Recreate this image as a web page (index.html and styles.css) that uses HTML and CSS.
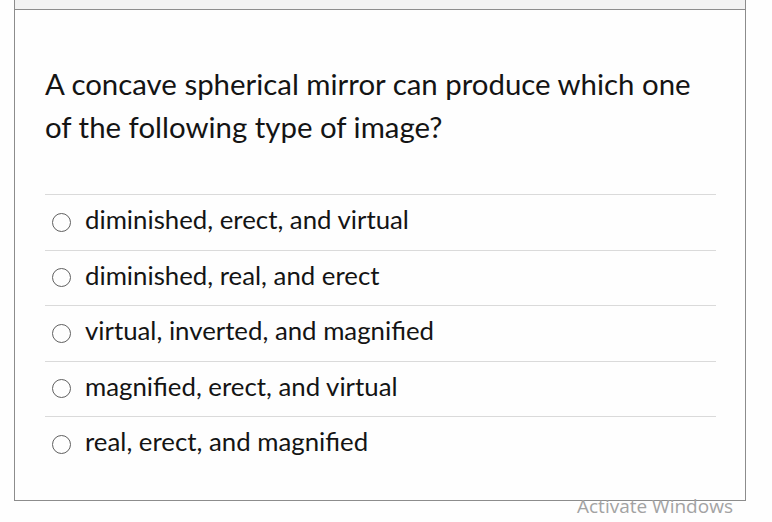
FILE: index.html
```html
<!DOCTYPE html>
<html>
<head>
<meta charset="utf-8">
<link rel="stylesheet" href="styles.css">
</head>
<body>
<div class="card">
  <div class="card-head"></div>
  <div class="question">A concave spherical mirror can produce which one of the following type of image?</div>
  <ul class="answers">
    <li class="answer"><span class="radio"></span><span class="label">diminished, erect, and virtual</span></li>
    <li class="answer"><span class="radio"></span><span class="label">diminished, real, and erect</span></li>
    <li class="answer"><span class="radio"></span><span class="label">virtual, inverted, and magnified</span></li>
    <li class="answer"><span class="radio"></span><span class="label">magnified, erect, and virtual</span></li>
    <li class="answer"><span class="radio"></span><span class="label">real, erect, and magnified</span></li>
  </ul>
</div>
<div class="watermark">Activate Windows</div>
</body>
</html>
```
FILE: styles.css
```css
html, body {
  margin: 0;
  padding: 0;
  background: #fefefe;
}
body {
  font-family: Lato, "Liberation Sans", sans-serif;
  color: #141414;
  position: relative;
  height: 522px;
  overflow: hidden;
}
.card {
  margin-left: 14px;
  width: 730px;
  height: 500px;
  border-left: 1px solid #8c8c8c;
  border-right: 1px solid #8c8c8c;
  border-bottom: 1px solid #8c8c8c;
}
.card-head {
  height: 9px;
  background: #f2f2f2;
  border-bottom: 1px solid #8c8c8c;
}
.question {
  margin: 52px 40px 0 30px;
  font-size: 29.4px;
  line-height: 43px;
}
.answers {
  list-style: none;
  margin: 46px 29px 0 30px;
  padding: 0;
}
.answer {
  display: flex;
  align-items: center;
  height: 54.5px;
  border-top: 1px solid #dadada;
}
.radio {
  width: 17px;
  height: 17px;
  border: 1px solid #606060;
  border-radius: 50%;
  margin-left: 7px;
  margin-right: 14px;
  flex: none;
}
.label {
  font-size: 25.8px;
  line-height: 30px;
  margin-top: -6px;
}
.watermark {
  position: absolute;
  left: 577px;
  top: 493px;
  font-family: "Open Sans", "DejaVu Sans", sans-serif;
  font-size: 19px;
  color: #a3a3a3;
}
```
